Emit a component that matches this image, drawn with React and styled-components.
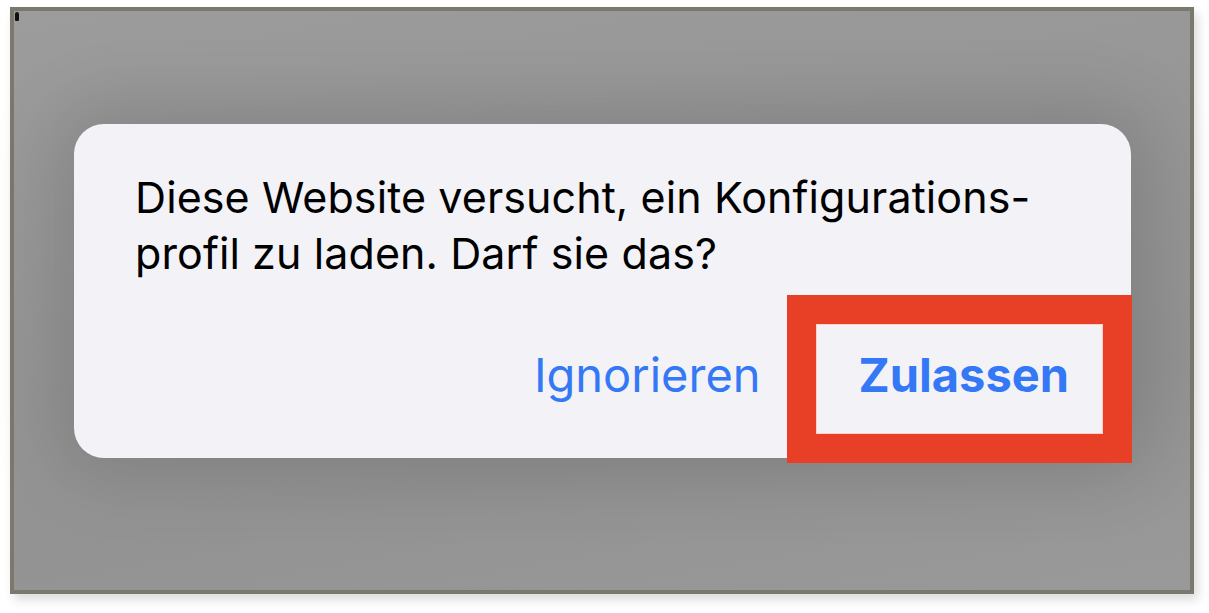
import React from "react";
import styled, { createGlobalStyle } from "styled-components";

const Global = createGlobalStyle`
  html, body { margin: 0; padding: 0; background: #ffffff; }
  body { font-family: Inter, "Noto Sans", "Liberation Sans", sans-serif; }
  #root { width: 1209px; height: 613px; overflow: hidden; }
`;

const Page = styled.div`
  width: 1209px;
  height: 613px;
  padding: 7px 0 0 10px;
  box-sizing: border-box;
`;

const Frame = styled.div`
  position: relative;
  width: 1184px;
  height: 587px;
  box-sizing: border-box;
  border: 4px solid #7b796d;
  background: linear-gradient(170deg, #9c9c9c 0%, #969696 40%, #939393 70%, #999999 100%);
  box-shadow: 4px 6px 10px rgba(0, 0, 0, 0.14);
  padding: 113px 0 0 60px;
`;

const Mark = styled.span`
  position: absolute;
  left: 1px;
  top: 1px;
  width: 4px;
  height: 9px;
  background: #111;
  border-radius: 2px 2px 1px 1px;
`;

const Dialog = styled.div`
  width: 1057px;
  height: 334px;
  box-sizing: border-box;
  background: #f2f2f7;
  border-radius: 30px;
  box-shadow: 0 0 70px 20px rgba(0, 0, 0, 0.13);
  padding: 45px 62px 0 61px;
  display: flex;
  flex-direction: column;
`;

const Message = styled.p`
  margin: 0;
  font-size: 43px;
  line-height: 56px;
  color: #000;
  font-weight: 400;
  letter-spacing: 0.1px;
`;

const Actions = styled.div`
  display: flex;
  justify-content: flex-end;
  align-items: baseline;
  gap: 98px;
  margin-top: 65px;
`;

const Action = styled.button`
  border: none;
  background: none;
  padding: 0;
  margin: 0;
  font-family: inherit;
  font-size: 47px;
  line-height: 58px;
  color: #3478f6;
  font-weight: ${(p) => (p.$primary ? 650 : 400)};
  cursor: pointer;
`;

const Highlight = styled.div`
  position: absolute;
  left: 773px;
  top: 284px;
  width: 345px;
  height: 168px;
  box-sizing: border-box;
  border: 29px solid #e84026;
  box-shadow: inset 0 0 0 1px rgba(255, 200, 190, 0.8);
  pointer-events: none;
`;

export default function App() {
  return (
    <>
      <Global />
      <Page>
        <Frame>
          <Mark />
          <Dialog>
            <Message>
              Diese Website versucht, ein Konfigurations-
              <br />
              profil zu laden. Darf sie das?
            </Message>
            <Actions>
              <Action>Ignorieren</Action>
              <Action $primary>Zulassen</Action>
            </Actions>
          </Dialog>
          <Highlight />
        </Frame>
      </Page>
    </>
  );
}
